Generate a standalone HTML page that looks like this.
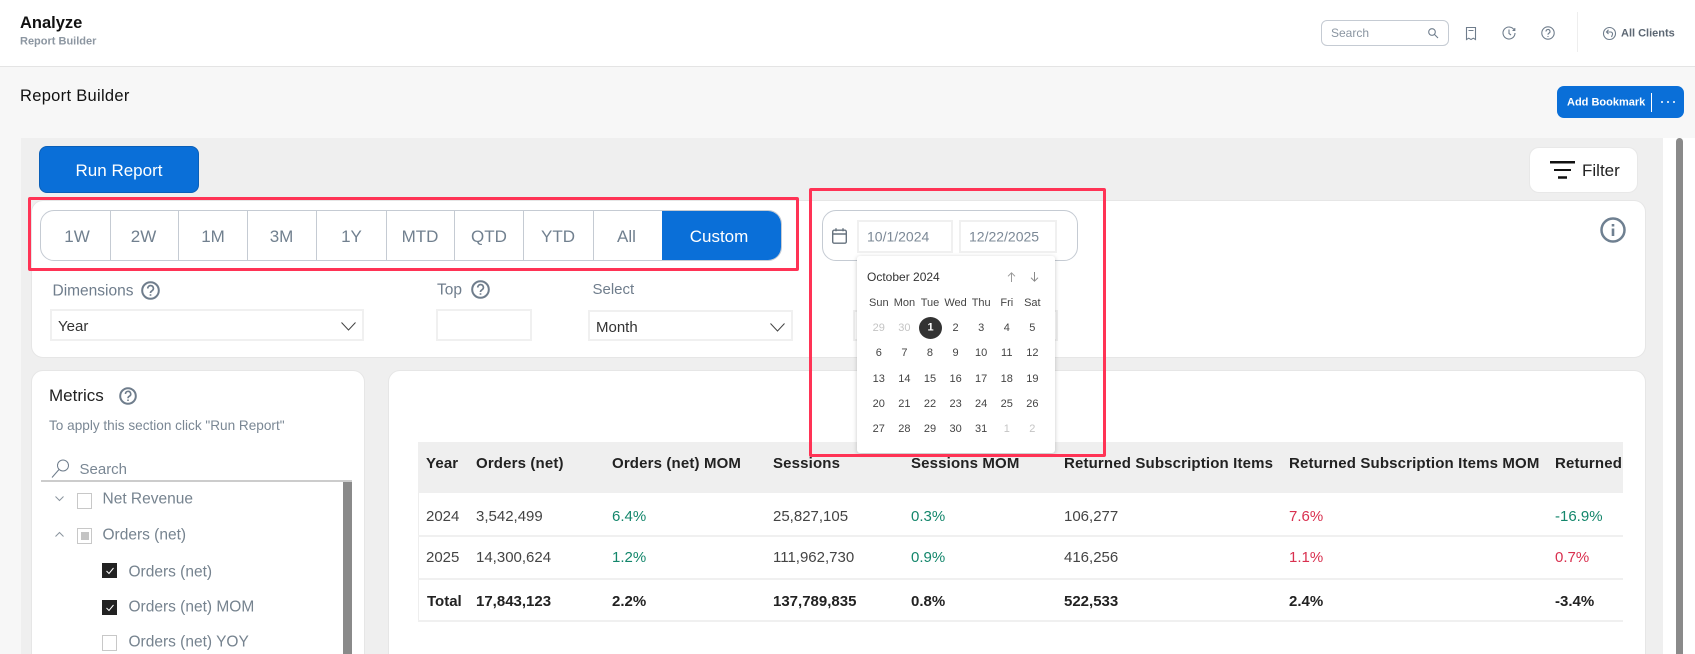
<!DOCTYPE html>
<html><head><meta charset="utf-8"><style>
html,body{margin:0;padding:0;width:1695px;height:654px;overflow:hidden;background:#f7f7f7;font-family:"Liberation Sans",sans-serif}
#p{position:relative;width:1695px;height:654px;overflow:hidden}
.a{position:absolute;box-sizing:border-box}
.t{position:absolute;white-space:nowrap;transform:translateY(calc(-50% + 1px));line-height:1.2}
.c{transform:translate(-50%,calc(-50% + 1px))}
.seg{color:#71808f;font-size:17px}
.lbl{color:#6f7d8c;font-size:15.5px}
.inp{position:absolute;box-sizing:border-box;border:2px solid #f0f0f0;background:#fff}
.red{position:absolute;box-sizing:border-box;border:3px solid #ff3355;border-radius:2px}
.th{font-size:15px;font-weight:bold;color:#222;letter-spacing:.15px}
.td{font-size:15px;color:#444}
.b{font-size:15px;font-weight:bold;color:#222}
.g{font-size:15px;color:#13866b}
.r{font-size:15px;color:#d9304f}
.tree{font-size:15.5px;color:#76838f}
.cb{position:absolute;box-sizing:border-box;width:15px;height:15px;border:1px solid #c8c8c8;background:#fff}
.ck{position:absolute;width:15px;height:15px;background:#222}
.cal{position:absolute;left:866px;display:grid;grid-template-columns:repeat(7,25.6px);grid-auto-rows:25.4px;font-size:11px;color:#444;text-align:center;line-height:25px}
.m{color:#c4c4c4}
svg{position:absolute;overflow:visible}
</style></head><body><div id="p">

<div class="a" style="left:0;top:0;width:1695px;height:67px;background:#fff;border-bottom:1px solid #e4e4e4"></div>
<div class="t" style="left:20px;top:23px;font-size:16.5px;font-weight:bold;color:#111">Analyze</div>
<div class="t" style="left:20px;top:41px;font-size:11px;font-weight:bold;color:#8c96a1">Report Builder</div>

<div class="a" style="left:1321px;top:20px;width:128px;height:26px;border:1px solid #c5cbd3;border-radius:6px;background:#fff"></div>
<div class="t" style="left:1331px;top:32px;font-size:12px;color:#8a95a1">Search</div>
<svg style="left:1428px;top:28px" width="10" height="10" fill="none" stroke="#6f7d8c" stroke-width="1.1"><circle cx="4" cy="4" r="3.3"/><path d="M6.400 6.400L10 10"/></svg>
<svg style="left:1466px;top:27px" width="10" height="13" fill="none" stroke="#6f7d8c" stroke-width="1.1"><path d="M.5.500h9v12l-2.200-1.300-2.300 1.300-2.300-1.300L.5 12.500zM2.500 3.500h5"/></svg>
<svg style="left:1502px;top:26px" width="14" height="14" fill="none" stroke="#6f7d8c" stroke-width="1.1"><path d="M12.200 4A6 6 0 1 0 13 7M7 3.500V7.500l2 1.500M12.800 2v2.500h-2.300"/></svg>
<svg style="left:1541px;top:26px" width="14" height="14" fill="none" stroke="#6f7d8c" stroke-width="1.1"><circle cx="7" cy="7" r="6.200"/><path d="M5 5.500a2 2 0 1 1 2.800 1.800C7.200 7.600 7 8 7 8.800M7 10v1"/></svg>
<div class="a" style="left:1577px;top:12px;width:1px;height:40px;background:#eee"></div>
<svg style="left:1603px;top:27px" width="13" height="13" fill="none" stroke="#6f7d8c" stroke-width="1.1"><circle cx="6.500" cy="6.500" r="6"/><path d="M3.500 5h4.500a2 2 0 0 1 1.500 2.500L8.500 10M5.500 2.800L3.500 5l2 2"/></svg>
<div class="t" style="left:1621px;top:33px;font-size:11px;font-weight:bold;color:#5c6773">All Clients</div>

<div class="t" style="left:20px;top:96px;font-size:16.5px;color:#111;letter-spacing:.3px">Report Builder</div>

<div class="a" style="left:1557px;top:86px;width:127px;height:32px;background:#0a6fd8;border-radius:7px"></div>
<div class="t" style="left:1567px;top:102px;font-size:11px;font-weight:bold;color:#fff">Add Bookmark</div>
<div class="a" style="left:1651px;top:93px;width:1px;height:19px;background:#fff"></div>
<svg style="left:1660px;top:100px" width="16" height="4" fill="#fff"><circle cx="2" cy="2" r="1"/><circle cx="8" cy="2" r="1"/><circle cx="14" cy="2" r="1"/></svg>

<div class="a" style="left:21px;top:138px;width:1642px;height:516px;background:#efefef"></div>
<div class="a" style="left:1663px;top:138px;width:32px;height:516px;background:#fff"></div>
<div class="a" style="left:1676px;top:138px;width:7px;height:516px;background:#8a8a8a;border-radius:4px 4px 0 0"></div>

<div class="a" style="left:39px;top:146px;width:160px;height:47px;background:#0a6fd8;border:1px solid #0a5fb8;border-radius:8px"></div>
<div class="t c" style="left:119px;top:170px;font-size:17px;color:#fff">Run Report</div>

<div class="a" style="left:1529px;top:147px;width:109px;height:46px;background:#fff;border:1px solid #e8e8e8;border-radius:10px"></div>
<svg style="left:1550px;top:161px" width="25" height="18" fill="none" stroke="#111"><path stroke-width="2.500" d="M0 1.200h25"/><path stroke-width="2" d="M4 9h17"/><path stroke-width="2.500" d="M8 16.500h9"/></svg>
<div class="t" style="left:1582px;top:170px;font-size:17px;color:#222">Filter</div>

<div class="a" style="left:31px;top:200px;width:1615px;height:158px;background:#fff;border:1px solid #e6e6e6;border-radius:12px"></div>

<div class="a" style="left:40px;top:210px;width:742px;height:51px;background:#fff;border:1px solid #c5cbd3;border-radius:14px;overflow:hidden">
<div class="a" style="left:621px;top:0;width:121px;height:51px;background:#0a6fd8"></div>
</div>
<div class="a" style="left:110px;top:210px;width:1px;height:51px;background:#c5cbd3"></div>
<div class="a" style="left:178px;top:210px;width:1px;height:51px;background:#c5cbd3"></div>
<div class="a" style="left:247px;top:210px;width:1px;height:51px;background:#c5cbd3"></div>
<div class="a" style="left:316px;top:210px;width:1px;height:51px;background:#c5cbd3"></div>
<div class="a" style="left:386px;top:210px;width:1px;height:51px;background:#c5cbd3"></div>
<div class="a" style="left:454px;top:210px;width:1px;height:51px;background:#c5cbd3"></div>
<div class="a" style="left:523px;top:210px;width:1px;height:51px;background:#c5cbd3"></div>
<div class="a" style="left:593px;top:210px;width:1px;height:51px;background:#c5cbd3"></div>
<div class="t c seg" style="left:77px;top:236px">1W</div>
<div class="t c seg" style="left:143.5px;top:236px">2W</div>
<div class="t c seg" style="left:213px;top:236px">1M</div>
<div class="t c seg" style="left:281.5px;top:236px">3M</div>
<div class="t c seg" style="left:351.5px;top:236px">1Y</div>
<div class="t c seg" style="left:420px;top:236px">MTD</div>
<div class="t c seg" style="left:489px;top:236px">QTD</div>
<div class="t c seg" style="left:558px;top:236px">YTD</div>
<div class="t c seg" style="left:626.5px;top:236px">All</div>
<div class="t c" style="left:719px;top:236px;font-size:17px;color:#fff">Custom</div>

<div class="t lbl" style="left:52.5px;top:291px">Dimensions</div>
<svg style="left:141px;top:281px" width="19" height="19" fill="none" stroke="#6f7d8c" stroke-width="2"><circle cx="9.500" cy="9.500" r="8.300"/><path stroke-width="1.700" d="M6.800 7.500a2.800 2.800 0 1 1 4.200 2.300c-.9.500-1.500 1-1.500 2.200M9.500 13.200v1.500"/></svg>
<div class="t lbl" style="left:437px;top:290px">Top</div>
<svg style="left:471px;top:280px" width="19" height="19" fill="none" stroke="#6f7d8c" stroke-width="2"><circle cx="9.500" cy="9.500" r="8.300"/><path stroke-width="1.700" d="M6.800 7.500a2.800 2.800 0 1 1 4.200 2.300c-.9.500-1.500 1-1.500 2.200M9.500 13.200v1.500"/></svg>
<div class="t" style="left:592.5px;top:289px;font-size:15px;color:#6f7d8c">Select</div>

<div class="inp" style="left:50px;top:309px;width:314px;height:32px"></div>
<div class="t" style="left:58px;top:326px;font-size:15px;color:#333">Year</div>
<svg style="left:341px;top:322px" width="15" height="9" fill="none" stroke="#444" stroke-width="1"><path d="M.5.500L7.500 8 14.500.500"/></svg>
<div class="inp" style="left:436px;top:309px;width:96px;height:32px"></div>
<div class="inp" style="left:588px;top:310px;width:205px;height:31px"></div>
<div class="t" style="left:596px;top:327px;font-size:15px;color:#333">Month</div>
<svg style="left:770px;top:323px" width="15" height="9" fill="none" stroke="#444" stroke-width="1"><path d="M.5.500L7.500 8 14.500.500"/></svg>

<div class="a" style="left:822px;top:210px;width:256px;height:51px;background:#fff;border:1px solid #c5cbd3;border-radius:14px"></div>
<svg style="left:832px;top:228px" width="15" height="16" fill="none" stroke="#66727e" stroke-width="1.400"><rect x=".7" y="2.200" width="13.600" height="13" rx="1.500"/><path d="M.7 6h13.600M4 .2v3M11 .2v3"/></svg>
<div class="inp" style="left:857px;top:220px;width:96px;height:33px"></div>
<div class="t" style="left:867px;top:236px;font-size:14px;color:#7b8896">10/1/2024</div>
<div class="inp" style="left:959px;top:220px;width:98px;height:33px"></div>
<div class="t" style="left:969px;top:236px;font-size:14px;color:#7b8896">12/22/2025</div>

<div class="inp" style="left:853px;top:310px;width:205px;height:31px"></div>

<div class="a" style="left:388px;top:370px;width:1258px;height:300px;background:#fff;border:1px solid #e6e6e6;border-radius:12px"></div>

<div class="a" style="left:418px;top:442px;width:1205px;height:51px;background:#efefef"></div>
<div class="a" style="left:418px;top:493px;width:1px;height:128px;background:#eee"></div>
<div class="a" style="left:418px;top:535px;width:1205px;height:2px;background:#f0f0f0"></div>
<div class="a" style="left:418px;top:578px;width:1205px;height:2px;background:#f0f0f0"></div>
<div class="a" style="left:418px;top:620px;width:1205px;height:2px;background:#f0f0f0"></div>

<div class="a" style="left:418px;top:442px;width:1205px;height:190px;overflow:hidden">
<div class="t th" style="left:8px;top:21px">Year</div>
<div class="t th" style="left:58px;top:21px">Orders (net)</div>
<div class="t th" style="left:194px;top:21px">Orders (net) MOM</div>
<div class="t th" style="left:355px;top:21px">Sessions</div>
<div class="t th" style="left:493px;top:21px">Sessions MOM</div>
<div class="t th" style="left:646px;top:21px">Returned Subscription Items</div>
<div class="t th" style="left:871px;top:21px">Returned Subscription Items MOM</div>
<div class="t th" style="left:1137px;top:21px">Returned Subscription Items YOY</div>

<div class="t td" style="left:8px;top:74px">2024</div>
<div class="t td" style="left:58px;top:74px">3,542,499</div>
<div class="t g" style="left:194px;top:74px">6.4%</div>
<div class="t td" style="left:355px;top:74px">25,827,105</div>
<div class="t g" style="left:493px;top:74px">0.3%</div>
<div class="t td" style="left:646px;top:74px">106,277</div>
<div class="t r" style="left:871px;top:74px">7.6%</div>
<div class="t g" style="left:1137px;top:74px">-16.9%</div>

<div class="t td" style="left:8px;top:115px">2025</div>
<div class="t td" style="left:58px;top:115px">14,300,624</div>
<div class="t g" style="left:194px;top:115px">1.2%</div>
<div class="t td" style="left:355px;top:115px">111,962,730</div>
<div class="t g" style="left:493px;top:115px">0.9%</div>
<div class="t td" style="left:646px;top:115px">416,256</div>
<div class="t r" style="left:871px;top:115px">1.1%</div>
<div class="t r" style="left:1137px;top:115px">0.7%</div>

<div class="t b" style="left:9px;top:159px">Total</div>
<div class="t b" style="left:58px;top:159px">17,843,123</div>
<div class="t b" style="left:194px;top:159px">2.2%</div>
<div class="t b" style="left:355px;top:159px">137,789,835</div>
<div class="t b" style="left:493px;top:159px">0.8%</div>
<div class="t b" style="left:646px;top:159px">522,533</div>
<div class="t b" style="left:871px;top:159px">2.4%</div>
<div class="t b" style="left:1137px;top:159px">-3.4%</div>
</div>

<div class="a" style="left:857px;top:256px;width:198px;height:197px;background:#fff;border-radius:3px;box-shadow:0 1px 5px rgba(0,0,0,.22)"></div>
<div class="t" style="left:867px;top:276px;font-size:12px;color:#333">October 2024</div>
<svg style="left:1007px;top:272px" width="9" height="10" fill="none" stroke="#999" stroke-width="1"><path d="M4.500 10V.8M1 4.300L4.500.8 8 4.300"/></svg>
<svg style="left:1030px;top:272px" width="9" height="10" fill="none" stroke="#888" stroke-width="1"><path d="M4.500 0v9.200M1 5.700l3.500 3.500L8 5.700"/></svg>
<div class="cal" style="top:290.5px">
<div>Sun</div><div>Mon</div><div>Tue</div><div>Wed</div><div>Thu</div><div>Fri</div><div>Sat</div>
<div class="m">29</div><div class="m">30</div><div style="color:#fff;font-weight:bold">1</div><div>2</div><div>3</div><div>4</div><div>5</div>
<div>6</div><div>7</div><div>8</div><div>9</div><div>10</div><div>11</div><div>12</div>
<div>13</div><div>14</div><div>15</div><div>16</div><div>17</div><div>18</div><div>19</div>
<div>20</div><div>21</div><div>22</div><div>23</div><div>24</div><div>25</div><div>26</div>
<div>27</div><div>28</div><div>29</div><div>30</div><div>31</div><div class="m">1</div><div class="m">2</div>
</div>
<div class="a" style="left:919px;top:317px;width:23px;height:22px;background:#333;border-radius:50%"></div>
<div class="t c" style="left:930.5px;top:327px;font-size:11px;font-weight:bold;color:#fff">1</div>

<div class="a" style="left:31px;top:370px;width:334px;height:300px;background:#fff;border:1px solid #e6e6e6;border-radius:12px"></div>
<div class="t" style="left:49px;top:395px;font-size:17px;color:#222">Metrics</div>
<svg style="left:119px;top:387px" width="18" height="18" fill="none" stroke="#6f7d8c" stroke-width="2"><circle cx="9" cy="9" r="7.800"/><path stroke-width="1.600" d="M6.500 7a2.600 2.600 0 1 1 3.900 2.200C9.500 9.700 9 10.200 9 11.200M9 12.500V14"/></svg>
<div class="t" style="left:49px;top:425px;font-size:13.6px;color:#7a8794">To apply this section click "Run Report"</div>
<svg style="left:51px;top:459px" width="19" height="19" fill="none" stroke="#6f7d8c" stroke-width="1"><circle cx="12" cy="6.500" r="5.500"/><path d="M8 10.500L1 18.500"/></svg>
<div class="t" style="left:79.5px;top:469px;font-size:15px;color:#7a8794">Search</div>
<div class="a" style="left:41px;top:480px;width:311px;height:2px;background:#ccc"></div>
<div class="a" style="left:343px;top:482px;width:9px;height:172px;background:#8a8a8a"></div>

<svg style="left:55px;top:496px" width="9" height="5" fill="none" stroke="#8a949e" stroke-width="1"><path d="M.5.500L4.500 4.500 8.500.500"/></svg>
<div class="cb" style="left:77px;top:493px;height:16px"></div>
<div class="t tree" style="left:102.5px;top:499px">Net Revenue</div>
<svg style="left:55px;top:532px" width="9" height="5" fill="none" stroke="#8a949e" stroke-width="1"><path d="M.5 4.500L4.500.5 8.500 4.500"/></svg>
<div class="cb" style="left:77px;top:528px;height:16px"></div>
<div class="a" style="left:81px;top:532px;width:8px;height:8px;background:#c4c4c4"></div>
<div class="t tree" style="left:102.5px;top:535px">Orders (net)</div>

<div class="ck" style="left:102px;top:563px"></div>
<svg style="left:106px;top:567px" width="8" height="8" fill="none" stroke="#fff" stroke-width="1"><path d="M.5 4l2.500 2.500L7.500 1"/></svg>
<div class="t tree" style="left:128.5px;top:572px">Orders (net)</div>
<div class="ck" style="left:102px;top:600px"></div>
<svg style="left:106px;top:604px" width="8" height="8" fill="none" stroke="#fff" stroke-width="1"><path d="M.5 4l2.500 2.500L7.500 1"/></svg>
<div class="t tree" style="left:128.5px;top:607px">Orders (net) MOM</div>
<div class="cb" style="left:102px;top:635px;height:16px"></div>
<div class="t tree" style="left:128.5px;top:642px">Orders (net) YOY</div>

<svg style="left:1600px;top:217px" width="26" height="26" fill="none" stroke="#6f8091" stroke-width="2.500"><circle cx="13" cy="13" r="11.500"/><path stroke-width="2.600" d="M13 11.500V19M13 7v2.500"/></svg>

<div class="red" style="left:28px;top:197px;width:771px;height:74px"></div>
<div class="red" style="left:809px;top:188px;width:297px;height:269px"></div>
</div></body></html>
